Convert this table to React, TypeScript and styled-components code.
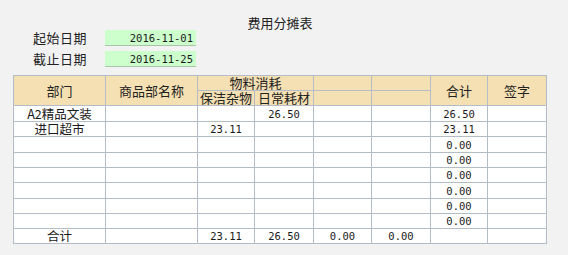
import React from "react";
import styled, { createGlobalStyle } from "styled-components";

const GlobalStyle = createGlobalStyle`
  html, body {
    margin: 0;
    padding: 0;
    background: #f2f2f2;
  }
  body {
    font-family: "Noto Sans CJK SC", "Noto Sans", sans-serif;
    color: #222222;
  }
`;

const Page = styled.div`
  display: flex;
  flex-direction: column;
  width: 568px;
  height: 255px;
  padding: 15px 0 0 13px;
  box-sizing: border-box;
`;

const Title = styled.div`
  width: 534px;
  height: 15px;
  line-height: 15px;
  font-size: 13px;
  text-align: center;
  color: #222222;
`;

const DateList = styled.div`
  display: flex;
  flex-direction: column;
  gap: 5px;
  margin-bottom: 8px;
`;

const DateRow = styled.div`
  display: flex;
  flex-direction: row;
  align-items: center;
  height: 16px;
`;

const DateLabel = styled.div`
  width: 72px;
  padding-left: 20px;
  font-size: 13px;
  line-height: 16px;
  letter-spacing: 0.5px;
`;

const DateBox = styled.div`
  width: 91px;
  height: 16px;
  line-height: 16px;
  box-sizing: border-box;
  background: #ccffcc;
  border-bottom: 1px solid #a9c4a9;
  text-align: right;
  padding-right: 3px;
  font-family: "DejaVu Sans Mono", "Liberation Mono", monospace;
  font-size: 10.5px;
  color: #1a1a1a;
`;

const Sheet = styled.table`
  width: 534px;
  table-layout: fixed;
  border-collapse: collapse;
  background: #ffffff;
  border: 1px solid #a4aab2;
`;

const HeadCell = styled.th`
  background: #f5e0b3;
  font-weight: normal;
  font-size: 13px;
  color: #222222;
  border: 1px solid #b3bcc7;
  padding: 0;
  height: 14px;
  line-height: 14px;
  text-align: center;
  white-space: nowrap;
`;

const Row = styled.tr<{ $h: number }>`
  height: ${p => p.$h}px;
`;

const Cell = styled.td<{ $num?: boolean }>`
  border: 1px solid #b3bcc7;
  padding: 0;
  text-align: center;
  white-space: nowrap;
  line-height: 14px;
  color: #1a1a1a;
  font-size: ${p => (p.$num ? "10.5px" : "12.5px")};
  font-family: ${p =>
    p.$num
      ? `"DejaVu Sans Mono", "Liberation Mono", monospace`
      : `"Noto Sans CJK SC", sans-serif`};
`;

const widths = [92, 92, 57, 59, 58, 59, 57, 59];

const rows: string[][] = [
  ["A2精品文装", "", "", "26.50", "", "", "26.50", ""],
  ["进口超市", "", "23.11", "", "", "", "23.11", ""],
  ["", "", "", "", "", "", "0.00", ""],
  ["", "", "", "", "", "", "0.00", ""],
  ["", "", "", "", "", "", "0.00", ""],
  ["", "", "", "", "", "", "0.00", ""],
  ["", "", "", "", "", "", "0.00", ""],
  ["", "", "", "", "", "", "0.00", ""],
  ["合计", "", "23.11", "26.50", "0.00", "0.00", "", ""],
];

const rowHeights = [16, 15, 16, 15, 15, 16, 15, 15, 15];

export default function App() {
  return (
    <>
      <GlobalStyle />
      <Page>
        <Title>费用分摊表</Title>
        <DateList>
          <DateRow>
            <DateLabel>起始日期</DateLabel>
            <DateBox>2016-11-01</DateBox>
          </DateRow>
          <DateRow>
            <DateLabel>截止日期</DateLabel>
            <DateBox>2016-11-25</DateBox>
          </DateRow>
        </DateList>
        <Sheet>
          <colgroup>
            {widths.map((w, i) => (
              <col key={i} style={{ width: w }} />
            ))}
          </colgroup>
          <thead>
            <Row $h={15}>
              <HeadCell rowSpan={2}>部门</HeadCell>
              <HeadCell rowSpan={2}>商品部名称</HeadCell>
              <HeadCell colSpan={2}>物料消耗</HeadCell>
              <HeadCell />
              <HeadCell />
              <HeadCell rowSpan={2}>合计</HeadCell>
              <HeadCell rowSpan={2}>签字</HeadCell>
            </Row>
            <Row $h={15}>
              <HeadCell>保洁杂物</HeadCell>
              <HeadCell>日常耗材</HeadCell>
              <HeadCell />
              <HeadCell />
            </Row>
          </thead>
          <tbody>
            {rows.map((r, i) => (
              <Row key={i} $h={rowHeights[i]}>
                {r.map((v, j) => (
                  <Cell key={j} $num={/^[0-9.]+$/.test(v)}>
                    {v}
                  </Cell>
                ))}
              </Row>
            ))}
          </tbody>
        </Sheet>
      </Page>
    </>
  );
}
